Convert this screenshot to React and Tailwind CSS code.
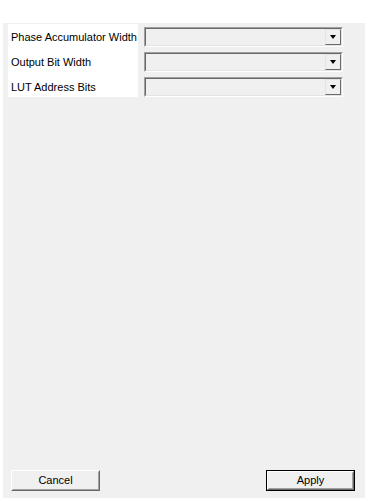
const fields = ['Phase Accumulator Width', 'Output Bit Width', 'LUT Address Bits'];

function Combo() {
  return (
    <div className="h-[20px] w-[199px] border border-t-[#a0a0a0] border-l-[#a0a0a0] border-r-white border-b-white">
      <div className="h-full w-full border border-t-[#696969] border-l-[#696969] border-r-[#e3e3e3] border-b-[#e3e3e3] bg-[#f0f0f0] flex justify-end">
        <div className="h-full w-[16px] border border-t-[#e3e3e3] border-l-[#e3e3e3] border-r-[#696969] border-b-[#696969] bg-[#f0f0f0] flex items-center justify-center">
          <div className="w-0 h-0 border-l-[3.5px] border-r-[3.5px] border-t-[4px] border-l-transparent border-r-transparent border-t-black" />
        </div>
      </div>
    </div>
  );
}

function Button({ label, primary }) {
  return (
    <div className={`h-[21px] w-[89px] ${primary ? 'border border-black' : ''}`}>
      <div className="h-full w-full border border-t-white border-l-white border-r-[#696969] border-b-[#696969]">
        <div className="h-full w-full border border-t-[#f0f0f0] border-l-[#f0f0f0] border-r-[#a0a0a0] border-b-[#a0a0a0] bg-[#f0f0f0] flex items-center justify-center text-[11px] text-black">
          {label}
        </div>
      </div>
    </div>
  );
}

export default function App() {
  return (
    <div className="w-[368px] h-[501px] bg-white pt-[23px] pl-[3px]" style={{ fontFamily: '"Liberation Sans", Arial, sans-serif' }}>
      <div className="w-[362px] h-[475px] bg-[#f0f0f0] flex flex-col">
        <div className="flex pl-[5px] pt-[1px]">
          <div className="w-[130px] h-[73px] bg-white flex flex-col pt-[3px] pl-[3px] gap-[5px]">
            {fields.map((f) => (
              <div key={f} className="h-[20px] flex items-center text-[11px] text-black whitespace-nowrap">
                {f}
              </div>
            ))}
          </div>
          <div className="ml-[6px] pt-[3px] flex flex-col gap-[5px]">
            {fields.map((f) => (
              <Combo key={f} />
            ))}
          </div>
        </div>
        <div className="flex-1" />
        <div className="flex justify-between pl-[8px] pr-[10px] pb-[7px]">
          <Button label="Cancel" />
          <Button label="Apply" primary />
        </div>
      </div>
    </div>
  );
}
